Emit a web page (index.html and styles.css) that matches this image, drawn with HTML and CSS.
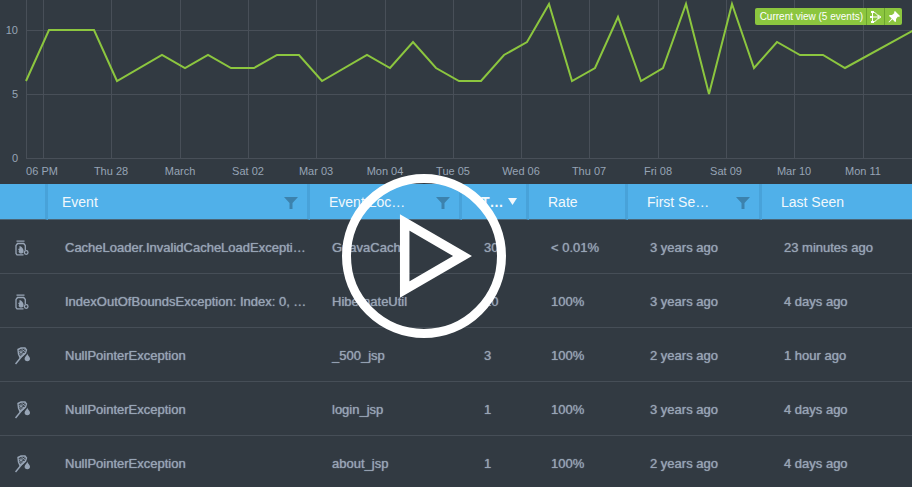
FILE: index.html
```html
<!DOCTYPE html>
<html lang="en">
<head>
<meta charset="utf-8">
<title>Events</title>
<link rel="stylesheet" href="styles.css">
</head>
<body>
<svg class="defs" aria-hidden="true">
  <symbol id="funnel" viewBox="0 0 14 12"><path d="M0 0h14L8.500 6v6h-3V6z" fill="currentColor"/></symbol>
  <symbol id="jar" viewBox="0 0 14 16">
    <path d="M1.500 1.200h8M2 3.500h7" fill="none" stroke="currentColor" stroke-width="1.300"/>
    <path d="M2.500 3.500L1 5.500V13.500L2 14.800H8.500M8.800 3.500L10.300 5.500V10" fill="none" stroke="currentColor" stroke-width="1.300"/>
    <path d="M4.500 6l1.500.5L7.500 8l1 2v2.500L7 13.500H5L3.500 12l.5-1.500L3 9l1.500-.5z" fill="currentColor"/>
    <circle cx="11.200" cy="12.500" r="1.800" fill="none" stroke="currentColor" stroke-width="1.300"/>
  </symbol>
  <symbol id="net" viewBox="0 0 16 18">
    <path d="M0.500 17L9.500 6" fill="none" stroke="currentColor" stroke-width="1.500"/>
    <path d="M3 2.500L6 1h4l1.500 2L10.500 6 8 8.500 5 10.500 3.500 7z" fill="none" stroke="currentColor" stroke-width="1.400"/>
    <path d="M4 4l5 3M6 1.500l4.500 4M4 6.500l6-4M6 3v6" fill="none" stroke="currentColor" stroke-width="0.800"/>
    <path d="M12.300 6.500C12.300 8.500 15 9.500 15 11.500a2.700 2.700 0 0 1-5.400 0C9.600 9.500 12.300 8.500 12.300 6.500z" fill="currentColor"/>
  </symbol>
</svg>
<main class="dashboard">
  <section class="chart-panel">
    <svg class="chart" viewBox="0 0 912 184" role="img" aria-label="Events over time">
      <path class="grid" d="M26 30H912M26 94H912M26 158H912M26 0V158M43 0V158M111 0V158M180 0V158M248 0V158M316 0V158M385 0V158M453 0V158M521 0V158M589 0V158M658 0V158M726 0V158M794 0V158M863 0V158"/>
      <polyline class="series" points="26,81 49,30 94,30 117,81 162,55 185,68 208,55 231,68 254,68 277,55 299,55 322,81 367,55 390,68 413,42 436,68 459,81 481,81 504,55 527,42 549,4 572,81 595,68 618,17 641,81 663,68 686,4 709,94 732,4 754,68 777,42 800,55 823,55 845,68 914,30"/>
      <g class="y-axis"><text x="18" y="34">10</text><text x="18" y="98">5</text><text x="18" y="162">0</text></g>
      <g class="x-axis">
        <text x="42" y="175">06 PM</text><text x="111" y="175">Thu 28</text><text x="180" y="175">March</text><text x="248" y="175">Sat 02</text><text x="316" y="175">Mar 03</text><text x="385" y="175">Mon 04</text><text x="453" y="175">Tue 05</text><text x="521" y="175">Wed 06</text><text x="589" y="175">Thu 07</text><text x="658" y="175">Fri 08</text><text x="726" y="175">Sat 09</text><text x="794" y="175">Mar 10</text><text x="863" y="175">Mon 11</text>
      </g>
    </svg>
    <div class="legend">
      <span class="legend-label">Current view (5 events)</span>
      <button class="legend-button" aria-label="Share"><svg width="12" height="14" viewBox="0 0 12 14" fill="none" stroke="currentColor"><path d="M2.500 2C6 2.500 7.500 4.500 8.500 7 7.500 9.500 6 11.500 2.500 12M1 7h9M2.500 2v10M8 5l3 2-3 2"/><path d="M1 1h3v2H1zM1 11h3v2H1zM0 6h2v2H0z" fill="currentColor" stroke="none"/></svg></button>
      <button class="legend-button" aria-label="Pin"><svg width="12" height="12" viewBox="0 0 12 12" fill="currentColor"><path d="M7 0l5 5-1 1-1-.4L8 8v2.500L7 11 4.500 8.300 1 11.500.5 11 3.700 7.500 1 5l.5-1H4l2.400-2L6 1z"/></svg></button>
    </div>
  </section>
  <table class="events">
    <colgroup><col class="c-icon"><col class="c-event"><col class="c-location"><col class="c-times"><col class="c-rate"><col class="c-first"><col></colgroup>
    <thead>
      <tr>
        <th aria-label="Type"></th>
        <th class="event"><div class="head"><span>Event</span><button aria-label="Filter event"><svg width="14" height="12"><use href="#funnel"/></svg></button></div></th>
        <th><div class="head"><span>Event Loc…</span><button aria-label="Filter location"><svg width="14" height="12"><use href="#funnel"/></svg></button></div></th>
        <th><div class="head sorted"><span>T…</span><svg width="9" height="7" viewBox="0 0 9 7"><path d="M0 0h9L4.500 7z" fill="currentColor"/></svg></div></th>
        <th><div class="head"><span>Rate</span></div></th>
        <th><div class="head"><span>First Se…</span><button aria-label="Filter first seen"><svg width="14" height="12"><use href="#funnel"/></svg></button></div></th>
        <th><div class="head"><span>Last Seen</span></div></th>
      </tr>
    </thead>
    <tbody>
      <tr><td class="icon"><svg width="14" height="16"><use href="#jar"/></svg></td><td class="event">CacheLoader.InvalidCacheLoadExcepti…</td><td>GuavaCache</td><td>30</td><td>&lt; 0.01%</td><td>3 years ago</td><td>23 minutes ago</td></tr>
      <tr><td class="icon"><svg width="14" height="16"><use href="#jar"/></svg></td><td class="event">IndexOutOfBoundsException: Index: 0, …</td><td>HibernateUtil</td><td>10</td><td>100%</td><td>3 years ago</td><td>4 days ago</td></tr>
      <tr><td class="icon"><svg width="16" height="18"><use href="#net"/></svg></td><td class="event">NullPointerException</td><td>_500_jsp</td><td>3</td><td>100%</td><td>2 years ago</td><td>1 hour ago</td></tr>
      <tr><td class="icon"><svg width="16" height="18"><use href="#net"/></svg></td><td class="event">NullPointerException</td><td>login_jsp</td><td>1</td><td>100%</td><td>3 years ago</td><td>4 days ago</td></tr>
      <tr><td class="icon"><svg width="16" height="18"><use href="#net"/></svg></td><td class="event">NullPointerException</td><td>about_jsp</td><td>1</td><td>100%</td><td>2 years ago</td><td>4 days ago</td></tr>
    </tbody>
  </table>
  <button class="play" aria-label="Play video">
    <svg width="164" height="164" viewBox="0 0 164 164" fill="none" stroke="currentColor"><circle cx="82" cy="82" r="77.500" stroke-width="9"/><path d="M62.700 48.500V115.500L120.500 82z" stroke-width="9.500"/></svg>
  </button>
</main>
</body>
</html>
```

FILE: styles.css
```css
* { box-sizing: border-box; }
body {
  margin: 0;
  background: #323a42;
  color: #97a4b5;
  font-family: "Liberation Sans", Arial, sans-serif;
  overflow: hidden;
}
button {
  display: flex;
  align-items: center;
  justify-content: center;
  margin: 0;
  padding: 0;
  border: 0;
  background: none;
  color: inherit;
  cursor: pointer;
}
.defs { position: absolute; width: 0; height: 0; }
.dashboard { position: relative; }
.chart-panel { position: relative; }
.chart { display: block; width: 100%; height: auto; }
.grid { fill: none; stroke: #484f58; stroke-width: 1; shape-rendering: crispEdges; }
.series { fill: none; stroke: #8cc63f; stroke-width: 2; }
.chart text { fill: #97a4b5; font-size: 11px; }
.x-axis { text-anchor: middle; }
.y-axis { text-anchor: end; }
.legend {
  position: absolute;
  top: 8px;
  right: 10px;
  display: flex;
  height: 17px;
  border-radius: 2px;
  background: #8cc63f;
  color: #fff;
  font-size: 10px;
  line-height: 17px;
}
.legend-label { padding: 0 3px 0 5px; white-space: nowrap; }
.legend-button { width: 18px; border-left: 1px solid #6da52e; }

.events {
  width: 100%;
  table-layout: fixed;
  border-collapse: separate;
  border-spacing: 0;
}
.c-icon { width: 48px; }
.c-event { width: 262px; }
.c-location { width: 152px; }
.c-times { width: 67px; }
.c-rate { width: 99px; }
.c-first { width: 134px; }
th {
  height: 36px;
  padding: 0 9px 0 19px;
  border-right: 3px solid #48a2d9;
  border-bottom: 1px solid #4b6475;
  background: #50b0e9;
  color: #f2f8fc;
  font-size: 14px;
  font-weight: 400;
  text-align: left;
  white-space: nowrap;
}
th:last-child { border-right: 0; }
th.event { padding-left: 14px; }
.head { display: flex; align-items: center; justify-content: space-between; }
.head button { color: #3c82ad; padding-top: 3px; }
.sorted { justify-content: flex-start; gap: 4px; font-weight: 700; }
td {
  height: 54px;
  padding: 2px 0 0 22px;
  border-bottom: 1px solid #464e57;
  font-size: 13px;
  white-space: nowrap;
  text-shadow: 0 0 1px #97a4b5;
}
td.event { padding-left: 17px; }
td.icon { padding-left: 15px; }
td svg { display: block; }
.play {
  position: absolute;
  top: 174px;
  left: 342px;
  border-radius: 50%;
  color: #fff;
}
```
